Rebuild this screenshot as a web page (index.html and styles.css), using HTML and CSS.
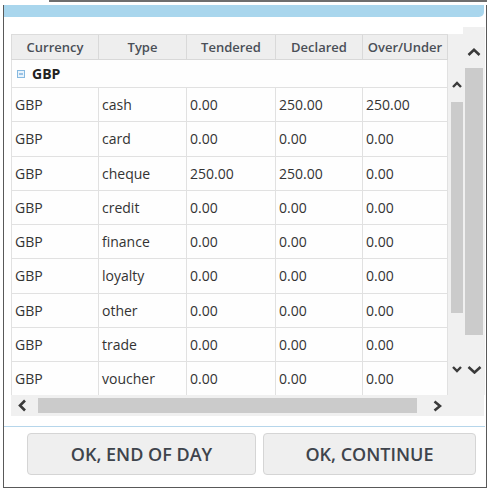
FILE: index.html
```html
<!DOCTYPE html>
<html>
<head>
<meta charset="utf-8">
<link rel="stylesheet" href="styles.css">
</head>
<body>
<div class="topline"></div>
<div class="window">
  <div class="titlebar"></div>
  <div class="main">
    <div class="gridwrap">
      <div class="table">
        <div class="header">
          <div class="hcell c1">Currency</div>
          <div class="hcell c2">Type</div>
          <div class="hcell c3">Tendered</div>
          <div class="hcell c4">Declared</div>
          <div class="hcell c5">Over/Under</div>
        </div>
        <div class="body">
          <div class="group">
            <svg class="minus" width="8" height="8" viewBox="0 0 8 8"><rect x="0.5" y="0.5" width="7" height="7" fill="#e9f3fb" stroke="#86b9e0"/><line x1="2" y1="4" x2="6" y2="4" stroke="#4d93d1" stroke-width="1"/></svg>
            <span class="gname">GBP</span>
          </div>
          <div class="row"><div class="cell c1">GBP</div><div class="cell c2">cash</div><div class="cell c3">0.00</div><div class="cell c4">250.00</div><div class="cell c5">250.00</div></div>
          <div class="row"><div class="cell c1">GBP</div><div class="cell c2">card</div><div class="cell c3">0.00</div><div class="cell c4">0.00</div><div class="cell c5">0.00</div></div>
          <div class="row"><div class="cell c1">GBP</div><div class="cell c2">cheque</div><div class="cell c3">250.00</div><div class="cell c4">250.00</div><div class="cell c5">0.00</div></div>
          <div class="row"><div class="cell c1">GBP</div><div class="cell c2">credit</div><div class="cell c3">0.00</div><div class="cell c4">0.00</div><div class="cell c5">0.00</div></div>
          <div class="row"><div class="cell c1">GBP</div><div class="cell c2">finance</div><div class="cell c3">0.00</div><div class="cell c4">0.00</div><div class="cell c5">0.00</div></div>
          <div class="row"><div class="cell c1">GBP</div><div class="cell c2">loyalty</div><div class="cell c3">0.00</div><div class="cell c4">0.00</div><div class="cell c5">0.00</div></div>
          <div class="row"><div class="cell c1">GBP</div><div class="cell c2">other</div><div class="cell c3">0.00</div><div class="cell c4">0.00</div><div class="cell c5">0.00</div></div>
          <div class="row"><div class="cell c1">GBP</div><div class="cell c2">trade</div><div class="cell c3">0.00</div><div class="cell c4">0.00</div><div class="cell c5">0.00</div></div>
          <div class="row"><div class="cell c1">GBP</div><div class="cell c2">voucher</div><div class="cell c3">0.00</div><div class="cell c4">0.00</div><div class="cell c5">0.00</div></div>
        </div>
      </div>
      <div class="vs-inner">
        <svg class="iv-up" width="10" height="7" viewBox="0 0 10 7"><polyline points="1,6 5,2 9,6" fill="none" stroke="#3a3a3a" stroke-width="2.4"/></svg>
        <div class="iv-thumb"></div>
        <svg class="iv-down" width="10" height="8" viewBox="0 0 10 8"><polyline points="1,2 5,6 9,2" fill="none" stroke="#3a3a3a" stroke-width="2.4"/></svg>
      </div>
    </div>
    <div class="vs-outer">
      <svg class="ov-up" width="14" height="8" viewBox="0 0 14 8"><polyline points="1.5,7 7,1.8 12.5,7" fill="none" stroke="#3a3a3a" stroke-width="2.6"/></svg>
      <div class="ov-thumb"></div>
      <svg class="ov-down" width="15" height="9" viewBox="0 0 15 9"><polyline points="1.5,2 7.5,7.5 13.5,2" fill="none" stroke="#3a3a3a" stroke-width="2.6"/></svg>
    </div>
  </div>
  <div class="hscroll">
    <svg class="h-left" width="8" height="13" viewBox="0 0 8 13"><polyline points="7,1.5 2,6.5 7,11.5" fill="none" stroke="#3a3a3a" stroke-width="2.6"/></svg>
    <div class="h-thumb"></div>
    <svg class="h-right" width="9" height="12" viewBox="0 0 9 12"><polyline points="1.5,1.5 7,6 1.5,10.5" fill="none" stroke="#3a3a3a" stroke-width="2.6"/></svg>
  </div>
  <div class="sep"></div>
  <div class="buttons">
    <div class="btn btn1">OK, END OF DAY</div>
    <div class="btn btn2">OK, CONTINUE</div>
  </div>
</div>
</body>
</html>
```

FILE: styles.css
```css
html, body {
  margin: 0;
  padding: 0;
  background: #ffffff;
}
body {
  font-family: "Open Sans", "Noto Sans", sans-serif;
  width: 491px;
  height: 490px;
  overflow: hidden;
}
.topline {
  margin-left: 49px;
  width: 438px;
  height: 2px;
  background: #6e6e6e;
}
.window {
  margin-left: 3px;
  width: 482px;
  height: 482px;
  border: 1px solid #595959;
  border-top: 0;
  background: #ffffff;
}
.titlebar {
  margin-top: 3px;
  height: 12px;
  margin-right: 2px;
  background: #a9d6ed;
  border-bottom-right-radius: 5px;
}
.main {
  display: flex;
  margin-top: 10px;
}
.gridwrap {
  display: flex;
  padding: 7px 0 0 7px;
}
.table {
  width: 437px;
}
.header {
  display: flex;
  height: 26px;
  box-sizing: border-box;
  background: #eeeeee;
  border-top: 1px solid #dcdcdc;
  border-left: 1px solid #dcdcdc;
  border-bottom: 1px solid #d8d8d8;
}
.hcell {
  box-sizing: border-box;
  border-right: 1px solid #d9d9d9;
  display: flex;
  align-items: center;
  justify-content: center;
  font-size: 13px;
  font-weight: 600;
  color: #4a4f57;
}
.c1 { width: 87px; }
.c2 { width: 88px; }
.c3 { width: 89px; }
.c4 { width: 87px; }
.c5 { width: 85px; }
.body {
  height: 335px;
  overflow: hidden;
  border-left: 1px solid #e1e1e1;
  background: #fefefe;
}
.group {
  height: 28px;
  box-sizing: border-box;
  border-bottom: 1px solid #e1e1e1;
  border-right: 1px solid #e1e1e1;
  display: flex;
  align-items: center;
  padding-left: 5px;
}
.minus {
  display: block;
  margin-right: 7px;
}
.gname {
  font-size: 14px;
  font-weight: 700;
  color: #222222;
}
.row {
  display: flex;
  height: 34.25px;
}
.cell {
  box-sizing: border-box;
  border-right: 1px solid #e1e1e1;
  border-bottom: 1px solid #e1e1e1;
  display: flex;
  align-items: center;
  padding-left: 3px;
  font-size: 14px;
  color: #333333;
}
.vs-inner {
  width: 15px;
  height: 361px;
  background: #f0f0f0;
  display: flex;
  flex-direction: column;
}
.iv-up {
  display: block;
  margin: 47px 0 0 4px;
}
.iv-thumb {
  margin: 14px 0 0 3px;
  width: 12px;
  height: 211px;
  background: #cbcbcb;
}
.iv-down {
  display: block;
  margin: 52px 0 0 4px;
}
.vs-outer {
  width: 22px;
  height: 368px;
  background: #f0f0f0;
  display: flex;
  flex-direction: column;
}
.ov-up {
  display: block;
  margin: 21px 0 0 4px;
}
.ov-thumb {
  margin: 12px 0 0 2px;
  width: 18px;
  height: 267px;
  background: #cbcbcb;
}
.ov-down {
  display: block;
  margin: 30px 0 0 4px;
}
.hscroll {
  margin-left: 7px;
  width: 473px;
  height: 21px;
  background: #f0f0f0;
  display: flex;
  align-items: center;
}
.h-left {
  display: block;
  margin-left: 7px;
}
.h-thumb {
  margin-left: 12px;
  width: 379px;
  height: 15px;
  background: #cbcbcb;
}
.h-right {
  display: block;
  margin-left: 16px;
}
.sep {
  margin-top: 10px;
  height: 1px;
  margin-right: 1px;
  background: #b6d6eb;
}
.buttons {
  display: flex;
  gap: 7px;
  padding-left: 23px;
  margin-top: 6px;
}
.btn {
  height: 42px;
  box-sizing: border-box;
  border: 1px solid #d5d5d5;
  border-radius: 4px;
  background: #efefef;
  display: flex;
  align-items: center;
  justify-content: center;
  font-size: 18px;
  font-weight: 600;
  color: #3e444c;
}
.btn1 { width: 229px; }
.btn2 { width: 213px; }
```
